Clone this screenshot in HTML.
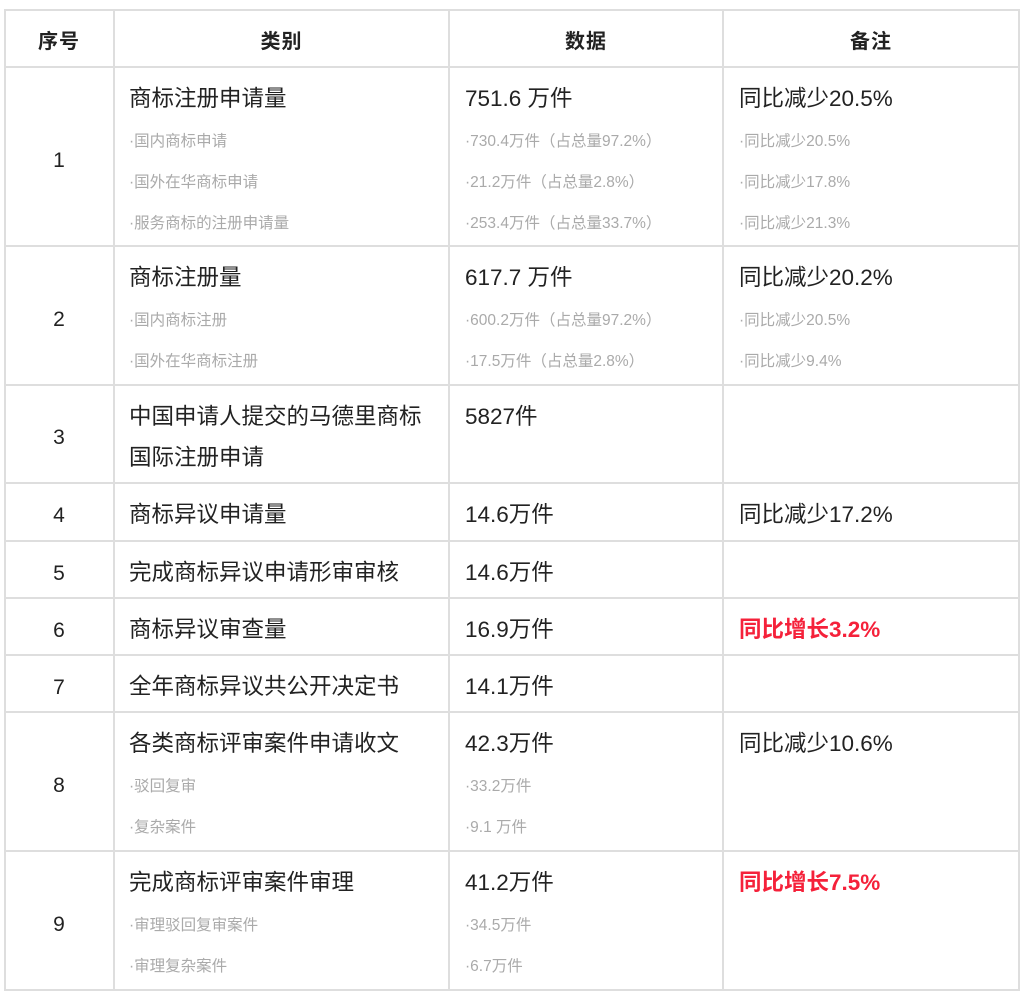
<!DOCTYPE html>
<html><head><meta charset="utf-8"><style>
body{margin:0;background:#fff;width:1027px;height:1001px;position:relative;overflow:hidden;font-family:"Liberation Sans","Noto Sans CJK SC",sans-serif;color:#222}
.h{position:absolute;background:#dedede;height:2px;left:4px;width:1016px}
.v{position:absolute;background:#dedede;width:2px;top:9px;height:982px}
.c{position:absolute;padding-top:10px;font-size:22.5px;white-space:nowrap}
.c div{height:41px;line-height:41px}
.c div.m{height:43px}
.c div.s{font-size:15.5px;color:#aaa}
.n{position:absolute;left:5px;width:108px;text-align:center;font-size:21px;display:flex;align-items:center;justify-content:center;padding-top:8px;box-sizing:border-box}
.hd{position:absolute;top:12px;height:55px;display:flex;align-items:center;justify-content:center;font-weight:bold;font-size:20px;letter-spacing:1px}
.r{color:#f5213a;font-weight:bold}
</style></head><body>
<div class="h" style="top:9px"></div>
<div class="h" style="top:66px"></div>
<div class="h" style="top:245px"></div>
<div class="h" style="top:384px"></div>
<div class="h" style="top:482px"></div>
<div class="h" style="top:540px"></div>
<div class="h" style="top:597px"></div>
<div class="h" style="top:654px"></div>
<div class="h" style="top:711px"></div>
<div class="h" style="top:850px"></div>
<div class="h" style="top:989px"></div>
<div class="v" style="left:4px"></div>
<div class="v" style="left:113px"></div>
<div class="v" style="left:448px"></div>
<div class="v" style="left:722px"></div>
<div class="v" style="left:1018px"></div>

<div class="hd" style="left:5px;width:108px">序号</div>
<div class="hd" style="left:115px;width:333px">类别</div>
<div class="hd" style="left:450px;width:272px">数据</div>
<div class="hd" style="left:724px;width:294px">备注</div>

<div class="n" style="top:68px;height:177px">1</div>
<div class="c" style="left:129px;top:68px"><div class="m">商标注册申请量</div><div class="s">·国内商标申请</div><div class="s">·国外在华商标申请</div><div class="s">·服务商标的注册申请量</div></div>
<div class="c" style="left:465px;top:68px"><div class="m">751.6 万件</div><div class="s">·730.4万件（占总量97.2%）</div><div class="s">·21.2万件（占总量2.8%）</div><div class="s">·253.4万件（占总量33.7%）</div></div>
<div class="c" style="left:739px;top:68px"><div class="m">同比减少20.5%</div><div class="s">·同比减少20.5%</div><div class="s">·同比减少17.8%</div><div class="s">·同比减少21.3%</div></div>

<div class="n" style="top:247px;height:137px">2</div>
<div class="c" style="left:129px;top:247px"><div class="m">商标注册量</div><div class="s">·国内商标注册</div><div class="s">·国外在华商标注册</div></div>
<div class="c" style="left:465px;top:247px"><div class="m">617.7 万件</div><div class="s">·600.2万件（占总量97.2%）</div><div class="s">·17.5万件（占总量2.8%）</div></div>
<div class="c" style="left:739px;top:247px"><div class="m">同比减少20.2%</div><div class="s">·同比减少20.5%</div><div class="s">·同比减少9.4%</div></div>

<div class="n" style="top:386px;height:96px">3</div>
<div class="c" style="left:129px;top:386px"><div>中国申请人提交的马德里商标</div><div>国际注册申请</div></div>
<div class="c" style="left:465px;top:386px"><div>5827件</div></div>

<div class="n" style="top:484px;height:56px">4</div>
<div class="c" style="left:129px;top:484px"><div>商标异议申请量</div></div>
<div class="c" style="left:465px;top:484px"><div>14.6万件</div></div>
<div class="c" style="left:739px;top:484px"><div>同比减少17.2%</div></div>

<div class="n" style="top:542px;height:55px">5</div>
<div class="c" style="left:129px;top:542px"><div>完成商标异议申请形审审核</div></div>
<div class="c" style="left:465px;top:542px"><div>14.6万件</div></div>

<div class="n" style="top:599px;height:55px">6</div>
<div class="c" style="left:129px;top:599px"><div>商标异议审查量</div></div>
<div class="c" style="left:465px;top:599px"><div>16.9万件</div></div>
<div class="c r" style="left:739px;top:599px"><div>同比增长3.2%</div></div>

<div class="n" style="top:656px;height:55px">7</div>
<div class="c" style="left:129px;top:656px"><div>全年商标异议共公开决定书</div></div>
<div class="c" style="left:465px;top:656px"><div>14.1万件</div></div>

<div class="n" style="top:713px;height:137px">8</div>
<div class="c" style="left:129px;top:713px"><div class="m">各类商标评审案件申请收文</div><div class="s">·驳回复审</div><div class="s">·复杂案件</div></div>
<div class="c" style="left:465px;top:713px"><div class="m">42.3万件</div><div class="s">·33.2万件</div><div class="s">·9.1 万件</div></div>
<div class="c" style="left:739px;top:713px"><div>同比减少10.6%</div></div>

<div class="n" style="top:852px;height:137px">9</div>
<div class="c" style="left:129px;top:852px"><div class="m">完成商标评审案件审理</div><div class="s">·审理驳回复审案件</div><div class="s">·审理复杂案件</div></div>
<div class="c" style="left:465px;top:852px"><div class="m">41.2万件</div><div class="s">·34.5万件</div><div class="s">·6.7万件</div></div>
<div class="c r" style="left:739px;top:852px"><div>同比增长7.5%</div></div>
</body></html>
